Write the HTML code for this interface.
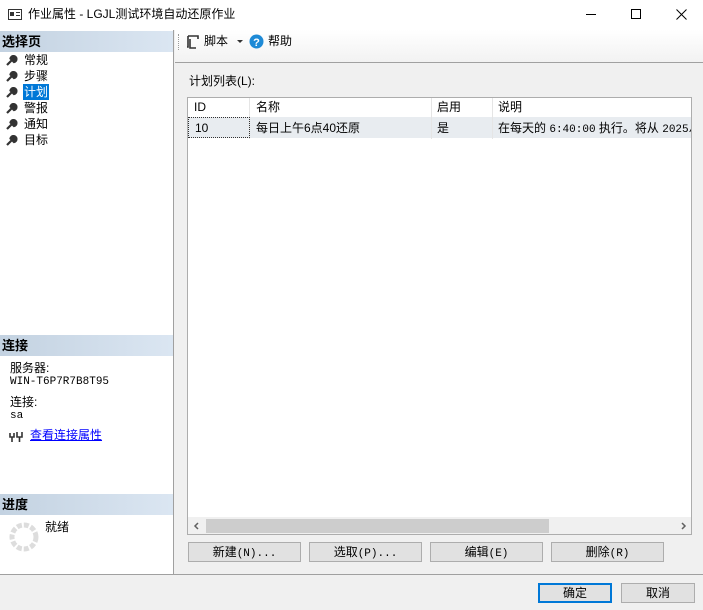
<!DOCTYPE html>
<html><head><meta charset="utf-8"><style>
*{margin:0;padding:0;box-sizing:border-box}
body{width:703px;height:610px;position:relative;overflow:hidden;background:#f0f0f0;font-family:"Liberation Sans","Noto Sans CJK SC",sans-serif;font-size:12px;line-height:15px;color:#000}
.a{position:absolute}
.hdr{position:absolute;left:0;width:173px;height:21px;background:linear-gradient(to right,#c3d2e1,#dbe6f2);font-weight:bold;font-size:13px;line-height:21px;padding-left:2px}
.item{position:absolute;left:6px;height:16px;line-height:16px;font-size:12px}
.item svg{position:absolute;left:0;top:3px}
.item span{position:absolute;left:17px;white-space:nowrap;padding:0 1px}
.mono{font-family:"Liberation Mono","Noto Sans CJK SC",monospace;font-size:11px;line-height:12px}
.btn{position:absolute;height:20px;background:#e1e1e1;border:1px solid #adadad;text-align:center;line-height:18px;font-size:12px}
.btn i{font-style:normal;font-family:"Liberation Mono",monospace;font-size:11px}
</style></head><body>
<div class="a" style="left:0;top:0;width:703px;height:30px;background:#fff"></div>
<svg class="a" style="left:8px;top:9px" width="14" height="11"><rect x="0.5" y="0.5" width="13" height="10" fill="none" stroke="#333"/><rect x="2" y="3" width="4" height="4" fill="#333"/><rect x="8" y="3" width="4" height="1" fill="#333"/><rect x="8" y="6" width="4" height="1" fill="#333"/></svg>
<div class="a" style="left:28px;top:7px;font-size:12px">作业属性 - LGJL测试环境自动还原作业</div>
<div class="a" style="left:586px;top:14px;width:10px;height:1px;background:#000"></div>
<div class="a" style="left:631px;top:9px;width:10px;height:10px;border:1px solid #000"></div>
<svg class="a" style="left:676px;top:9px" width="11" height="11"><path d="M0.5 0.5L10.5 10.5M10.5 0.5L0.5 10.5" stroke="#000"/></svg>

<div class="a" style="left:0;top:30px;width:174px;height:544px;background:#fff;border-right:1px solid #a0a0a0"></div>
<div class="hdr" style="top:31px">选择页</div>
<div class="item" style="top:52px"><svg width="12" height="11"><path d="M1 10L6 5M4.5 3.5A3 3 0 1 1 8 7L6 5z" stroke="#333" stroke-width="2.2" fill="#333"/></svg><span>常规</span></div>
<div class="item" style="top:68px"><svg width="12" height="11"><path d="M1 10L6 5M4.5 3.5A3 3 0 1 1 8 7L6 5z" stroke="#333" stroke-width="2.2" fill="#333"/></svg><span>步骤</span></div>
<div class="item" style="top:84px"><svg width="12" height="11"><path d="M1 10L6 5M4.5 3.5A3 3 0 1 1 8 7L6 5z" stroke="#333" stroke-width="2.2" fill="#333"/></svg><span style="background:#0078d7;color:#fff">计划</span></div>
<div class="item" style="top:100px"><svg width="12" height="11"><path d="M1 10L6 5M4.5 3.5A3 3 0 1 1 8 7L6 5z" stroke="#333" stroke-width="2.2" fill="#333"/></svg><span>警报</span></div>
<div class="item" style="top:116px"><svg width="12" height="11"><path d="M1 10L6 5M4.5 3.5A3 3 0 1 1 8 7L6 5z" stroke="#333" stroke-width="2.2" fill="#333"/></svg><span>通知</span></div>
<div class="item" style="top:132px"><svg width="12" height="11"><path d="M1 10L6 5M4.5 3.5A3 3 0 1 1 8 7L6 5z" stroke="#333" stroke-width="2.2" fill="#333"/></svg><span>目标</span></div>

<div class="hdr" style="top:335px">连接</div>
<div class="a" style="left:10px;top:361px">服务器:</div>
<div class="a mono" style="left:10px;top:376px">WIN-T6P7R7B8T95</div>
<div class="a" style="left:10px;top:395px">连接:</div>
<div class="a mono" style="left:10px;top:410px">sa</div>
<svg class="a" style="left:9px;top:431px" width="14" height="12"><path d="M1 2v4h4v-4M3 6v5M8 1v5h5v-5M10.5 6v5" stroke="#333" stroke-width="1.6" fill="none"/></svg>
<div class="a" style="left:30px;top:428px;color:#0000ff;text-decoration:underline">查看连接属性</div>

<div class="hdr" style="top:494px">进度</div>
<svg class="a" style="left:9px;top:522px" width="30" height="30"><circle cx="15" cy="15" r="12" fill="none" stroke="#ddd" stroke-width="5" stroke-dasharray="5 2"/></svg>
<div class="a" style="left:45px;top:520px">就绪</div>

<div class="a" style="left:175px;top:30px;width:528px;height:33px;background:linear-gradient(#fff,#f2f2f2);border-bottom:1px solid #a0a0a0"></div>
<div class="a" style="left:178px;top:34px;width:1px;height:16px;border-left:1px dotted #999"></div>
<svg class="a" style="left:186px;top:35px" width="14" height="14"><path d="M2 1h10v3M2 1v11h-1M4 4v9h6" stroke="#333" stroke-width="1.6" fill="none"/></svg>
<div class="a" style="left:204px;top:34px;font-size:12px">脚本</div>
<svg class="a" style="left:237px;top:40px" width="6" height="4"><path d="M0 0h6L3 3z" fill="#333"/></svg>
<svg class="a" style="left:249px;top:34px" width="15" height="15"><circle cx="7.5" cy="7.5" r="7" fill="#1e8ad6"/><text x="7.5" y="12" text-anchor="middle" fill="#fff" font-size="11" font-weight="bold" font-family="Liberation Sans">?</text></svg>
<div class="a" style="left:268px;top:34px">帮助</div>

<div class="a" style="left:189px;top:74px">计划列表(L):</div>
<div class="a" style="left:187px;top:97px;width:505px;height:438px;background:#fff;border:1px solid #adadad">
  <div class="a" style="left:0;top:19px;width:503px;height:21px;background:#e8ecf0"></div>
  <div class="a" style="left:61px;top:0;height:41px;border-left:1px solid #e5e5e5"></div>
  <div class="a" style="left:243px;top:0;height:41px;border-left:1px solid #e5e5e5"></div>
  <div class="a" style="left:304px;top:0;height:41px;border-left:1px solid #e5e5e5"></div>
  <div class="a" style="left:0;top:19px;width:62px;height:21px;border:1px dotted #333"></div>
  <div class="a" style="left:6px;top:2px">ID</div>
  <div class="a" style="left:68px;top:2px">名称</div>
  <div class="a" style="left:249px;top:2px">启用</div>
  <div class="a" style="left:310px;top:2px">说明</div>
  <div class="a" style="left:7px;top:23px">10</div>
  <div class="a" style="left:68px;top:23px">每日上午6点40还原</div>
  <div class="a" style="left:249px;top:23px">是</div>
  <div class="a" style="left:310px;top:23px;white-space:nowrap;width:193px;overflow:hidden">在每天的 <span class="mono">6:40:00</span> 执行。将从 <span class="mono">2025/</span></div>
  <div class="a" style="left:0;top:419px;width:503px;height:17px;background:#f0f0f0"></div>
  <div class="a" style="left:18px;top:421px;width:343px;height:14px;background:#cdcdcd"></div>
  <svg class="a" style="left:5px;top:424px" width="6" height="8"><path d="M5 1L2 4L5 7" stroke="#606060" stroke-width="1.5" fill="none"/></svg>
  <svg class="a" style="left:493px;top:424px" width="6" height="8"><path d="M1 1L4 4L1 7" stroke="#606060" stroke-width="1.5" fill="none"/></svg>
</div>
<div class="btn" style="left:188px;top:542px;width:113px">新建<i>(N)...</i></div>
<div class="btn" style="left:309px;top:542px;width:113px">选取<i>(P)...</i></div>
<div class="btn" style="left:430px;top:542px;width:113px">编辑<i>(E)</i></div>
<div class="btn" style="left:551px;top:542px;width:113px">删除<i>(R)</i></div>

<div class="a" style="left:0;top:574px;width:703px;height:1px;background:#a0a0a0"></div>
<div class="btn" style="left:538px;top:583px;width:74px;border:2px solid #0078d7;line-height:16px">确定</div>
<div class="btn" style="left:621px;top:583px;width:74px">取消</div>
</body></html>
